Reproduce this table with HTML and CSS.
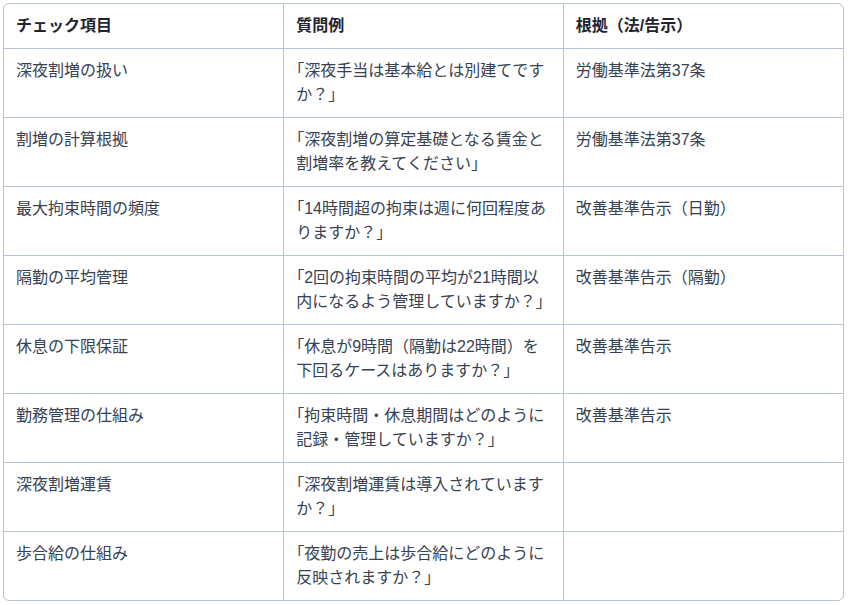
FILE: index.html
```html
<!DOCTYPE html>
<html lang="ja">
<head>
<meta charset="utf-8">
<link rel="stylesheet" href="styles.css">
</head>
<body>
<div class="table-wrap">
  <table class="check-table">
    <thead>
      <tr>
        <th>チェック項目</th>
        <th>質問例</th>
        <th>根拠（法/告示）</th>
      </tr>
    </thead>
    <tbody>
      <tr><td>深夜割増の扱い</td><td><span class="open">「</span>深夜手当は基本給とは別建てですか？」</td><td>労働基準法第37条</td></tr>
      <tr><td>割増の計算根拠</td><td><span class="open">「</span>深夜割増の算定基礎となる賃金と割増率を教えてください」</td><td>労働基準法第37条</td></tr>
      <tr><td>最大拘束時間の頻度</td><td><span class="open">「</span>14時間超の拘束は週に何回程度ありますか？」</td><td>改善基準告示（日勤）</td></tr>
      <tr><td>隔勤の平均管理</td><td><span class="open">「</span>2回の拘束時間の平均が21時間以内になるよう管理していますか？」</td><td>改善基準告示（隔勤）</td></tr>
      <tr><td>休息の下限保証</td><td><span class="open">「</span>休息が9時間（隔勤は22時間）を下回るケースはありますか？」</td><td>改善基準告示</td></tr>
      <tr><td>勤務管理の仕組み</td><td><span class="open">「</span>拘束時間・休息期間はどのように記録・管理していますか？」</td><td>改善基準告示</td></tr>
      <tr><td>深夜割増運賃</td><td><span class="open">「</span>深夜割増運賃は導入されていますか？」</td><td></td></tr>
      <tr><td>歩合給の仕組み</td><td><span class="open">「</span>夜勤の売上は歩合給にどのように反映されますか？」</td><td></td></tr>
    </tbody>
  </table>
</div>
</body>
</html>
```
FILE: styles.css
```css
html, body {
  margin: 0;
  padding: 0;
  background: #ffffff;
}

body {
  font-family: "Liberation Sans", "Noto Sans CJK JP", sans-serif;
  font-size: 16px;
  line-height: 24px;
  color: #374151;
}

.table-wrap {
  margin: 3px 4px 4px 3px;
  border: 1px solid #b7c4d1;
  border-radius: 6px;
  overflow: hidden;
}

.check-table {
  width: 100%;
  table-layout: fixed;
  border-collapse: collapse;
}

.check-table th,
.check-table td {
  padding: 10px 12px;
  text-align: left;
  vertical-align: top;
  border-right: 1px solid #b7c4d1;
  border-bottom: 1px solid #b7c4d1;
}

.check-table th:last-child,
.check-table td:last-child {
  border-right: none;
}

.check-table tbody tr:last-child td {
  border-bottom: none;
}

.check-table th {
  font-weight: 700;
  color: #1f2430;
}

.open {
  font-feature-settings: "halt" 1;
}
```
